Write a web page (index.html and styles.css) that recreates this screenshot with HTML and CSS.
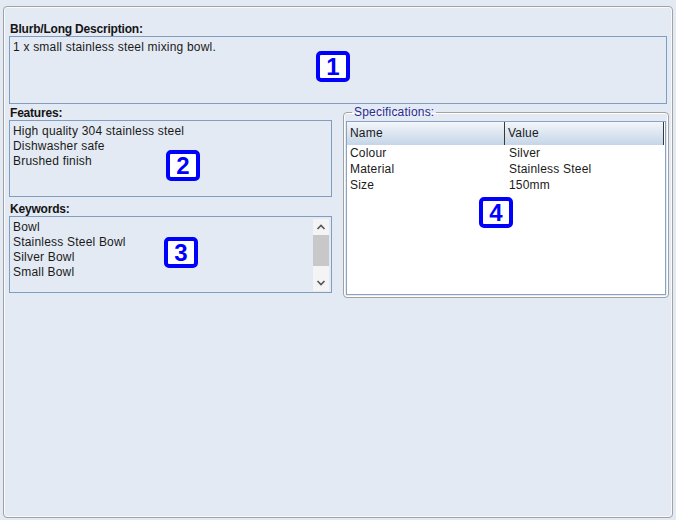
FILE: index.html
```html
<!DOCTYPE html>
<html>
<head>
<meta charset="utf-8">
<link rel="stylesheet" href="styles.css">
</head>
<body>
<div class="panel">
  <div class="label">Blurb/Long Description:</div>
  <div class="textbox blurb">
    <div class="line">1 x small stainless steel mixing bowl.</div>
    <div class="badge b1">1</div>
  </div>
  <div class="row">
    <div class="leftcol">
      <div class="label">Features:</div>
      <div class="textbox list">
        <div class="line">High quality 304 stainless steel</div>
        <div class="line">Dishwasher safe</div>
        <div class="line">Brushed finish</div>
        <div class="badge b2">2</div>
      </div>
      <div class="label kw">Keywords:</div>
      <div class="textbox list keywords">
        <div class="kwlines">
          <div class="line">Bowl</div>
          <div class="line">Stainless Steel Bowl</div>
          <div class="line">Silver Bowl</div>
          <div class="line">Small Bowl</div>
        </div>
        <div class="scrollbar">
          <div class="sbtn">
            <svg width="16" height="16" viewBox="0 0 16 16"><path d="M4.5 10 L8 6.5 L11.5 10" fill="none" stroke="#555" stroke-width="1.6"/></svg>
          </div>
          <div class="thumb"></div>
          <div class="track"></div>
          <div class="sbtn">
            <svg width="16" height="16" viewBox="0 0 16 16"><path d="M4.5 6 L8 9.5 L11.5 6" fill="none" stroke="#555" stroke-width="1.6"/></svg>
          </div>
        </div>
        <div class="badge b3">3</div>
      </div>
    </div>
    <fieldset class="specs">
      <legend>Specifications:</legend>
      <div class="table">
        <div class="thead">
          <div class="th c1">Name</div>
          <div class="th c2">Value</div>
        </div>
        <div class="tr"><div class="td c1">Colour</div><div class="td c2">Silver</div></div>
        <div class="tr"><div class="td c1">Material</div><div class="td c2">Stainless Steel</div></div>
        <div class="tr"><div class="td c1">Size</div><div class="td c2">150mm</div></div>
        <div class="badge b4">4</div>
      </div>
    </fieldset>
  </div>
</div>
</body>
</html>
```
FILE: styles.css
```css
html, body {
  margin: 0;
  padding: 0;
  background: #e3eaf4;
}
body {
  width: 676px;
  height: 520px;
  overflow: hidden;
  font-family: "Liberation Sans", Arial, sans-serif;
  font-size: 12px;
  letter-spacing: 0.2px;
  color: #1a1a1a;
}
.panel {
  box-sizing: border-box;
  margin: 6px 0 0 3px;
  width: 670px;
  height: 512px;
  border: 1px solid #a2a2a2;
  border-radius: 4px;
  box-shadow: inset 0 0 0 1px #f7f9fc;
  padding: 16px 5px 0 5px;
}
.label {
  font-weight: bold;
  letter-spacing: -0.2px;
  line-height: 13px;
  height: 13px;
  padding-left: 1px;
  color: #141414;
}
.textbox {
  position: relative;
  box-sizing: border-box;
  border: 1px solid #7f9dbf;
  padding: 3px 3px 0 3px;
}
.line {
  line-height: 15px;
  height: 15px;
  white-space: nowrap;
}
.blurb {
  height: 68px;
}
.row {
  display: flex;
  gap: 11px;
  margin-top: 3px;
  margin-right: -2px;
  align-items: flex-start;
}
.leftcol {
  width: 323px;
  flex: none;
}
.list {
  height: 77px;
}
.kw {
  margin-top: 6px;
}
.keywords {
  display: flex;
  padding-right: 0;
}
.kwlines {
  flex: 1;
}
.scrollbar {
  width: 16px;
  flex: none;
  margin: -1px 2px 1px 0;
  background: #f4f4f4;
  display: flex;
  flex-direction: column;
}
.sbtn {
  height: 16px;
  flex: none;
}
.sbtn svg {
  display: block;
}
.thumb {
  height: 31px;
  flex: none;
  background: #c8c8c8;
}
.track {
  flex: 1;
}
.specs {
  box-sizing: border-box;
  width: 326px;
  flex: none;
  margin: -1px 0 0 0;
  padding: 2px 2px 2px 2px;
  border: 1px solid #a2a2a2;
  border-radius: 4px;
  box-shadow: inset 0 0 0 1px #ffffff;
  min-width: 0;
}
.specs legend {
  margin-left: 6px;
  padding: 0 2px;
  line-height: 13px;
  color: #2b2b8f;
}
.table {
  position: relative;
  box-sizing: border-box;
  height: 174px;
  border: 1px solid #8aa3c2;
  background: #ffffff;
}
.thead {
  display: flex;
  height: 23px;
  background: linear-gradient(#f3f6fa, #c5d5e7);
  margin-right: 1px;
}
.th {
  box-sizing: border-box;
  line-height: 23px;
  padding-left: 3px;
  border-right: 1px solid #3a3a3a;
}
.c1 {
  width: 158px;
  flex: none;
}
.c2 {
  flex: 1;
}
.tr {
  display: flex;
  height: 16px;
  line-height: 16px;
}
.td {
  box-sizing: border-box;
  padding-left: 3px;
}
.td.c2 {
  padding-left: 4px;
}
.badge {
  position: absolute;
  box-sizing: border-box;
  width: 34px;
  height: 31px;
  border: 4px solid #0000ff;
  border-radius: 5px;
  background: #ffffff;
  color: #0000ff;
  font-weight: bold;
  font-size: 24px;
  letter-spacing: 0;
  line-height: 23px;
  text-align: center;
}
.b1 { left: 306px; top: 14px; }
.b2 { left: 156px; top: 29px; }
.b3 { left: 154px; top: 20px; }
.b4 { left: 132px; top: 75px; }
```
